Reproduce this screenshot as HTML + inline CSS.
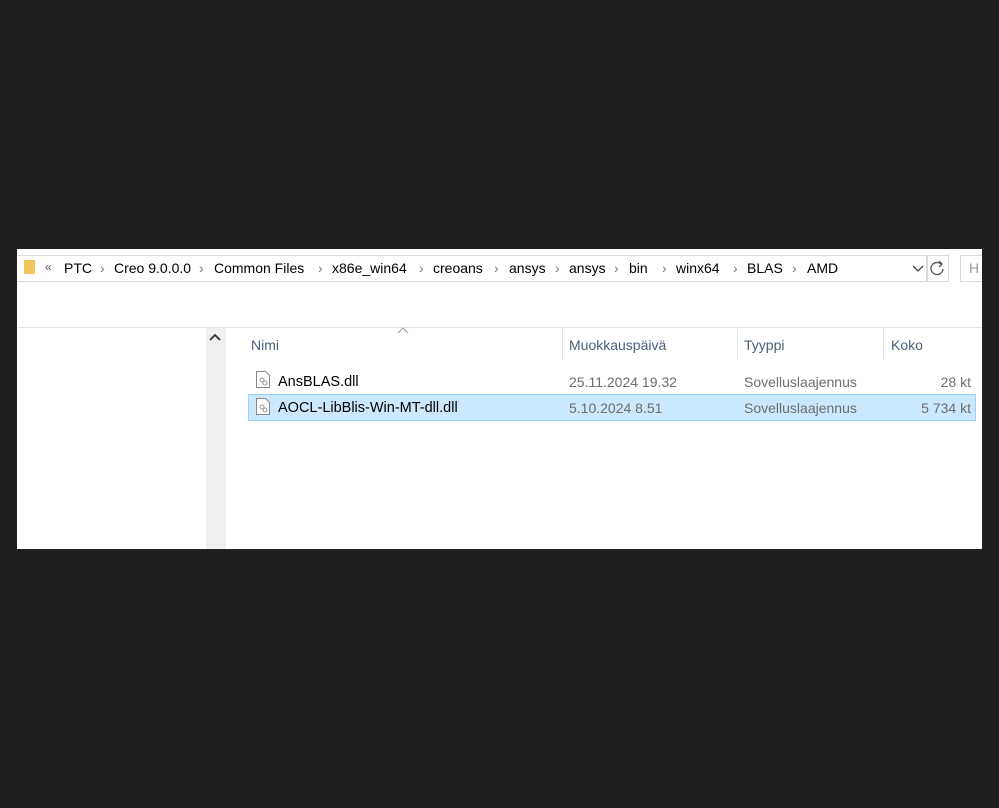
<!DOCTYPE html><html><head><style>
body{margin:0;width:999px;height:808px;background:#1f1f1f;position:relative;overflow:hidden;font-family:"Liberation Sans",sans-serif;font-size:14px;color:#000}
.a{position:absolute;white-space:nowrap}
.g{color:#6d6d6d}
.s{position:absolute;top:260px;color:#777;font-size:14px}
.b{position:absolute;top:260px;white-space:nowrap}
</style></head><body>
<div class="a" style="left:17px;top:249px;width:965px;height:300px;background:#fff"></div>
<div class="a" style="left:18px;top:255px;width:909px;height:27px;border:1px solid #d9d9d9;border-left:none;box-sizing:border-box"></div>
<div class="a" style="left:927px;top:255px;width:22px;height:27px;border:1px solid #d9d9d9;box-sizing:border-box"></div>
<div class="a" style="left:960px;top:255px;width:22px;height:27px;border:1px solid #d9d9d9;border-right:none;box-sizing:border-box"></div>
<div class="a" style="left:969px;top:260px;color:#999">H</div>
<div class="a" style="left:24px;top:260px;width:11px;height:14px;background:#f2c55c;border-radius:1px"></div>
<div class="a" style="left:45px;top:260px;font-size:12px;color:#555">«</div>
<div class="b" style="left:64px">PTC</div><div class="s" style="left:100px">›</div>
<div class="b" style="left:114px">Creo 9.0.0.0</div><div class="s" style="left:199px">›</div>
<div class="b" style="left:214px">Common Files</div><div class="s" style="left:318px">›</div>
<div class="b" style="left:332px">x86e_win64</div><div class="s" style="left:419px">›</div>
<div class="b" style="left:433px">creoans</div><div class="s" style="left:494px">›</div>
<div class="b" style="left:509px">ansys</div><div class="s" style="left:555px">›</div>
<div class="b" style="left:569px">ansys</div><div class="s" style="left:614px">›</div>
<div class="b" style="left:629px">bin</div><div class="s" style="left:662px">›</div>
<div class="b" style="left:676px">winx64</div><div class="s" style="left:733px">›</div>
<div class="b" style="left:747px">BLAS</div><div class="s" style="left:792px">›</div>
<div class="b" style="left:807px">AMD</div>
<svg class="a" style="left:912px;top:265px" width="12" height="8"><path d="M1 1l5 5 5-5" fill="none" stroke="#444" stroke-width="1.3"/></svg>
<svg class="a" style="left:930px;top:260px" width="16" height="18"><path d="M11 4A6 6 0 1 0 13 9" fill="none" stroke="#555" stroke-width="1.3"/><path d="M9 1l3 3-3 3" fill="none" stroke="#555" stroke-width="1.3"/></svg>
<div class="a" style="left:18px;top:327px;width:964px;height:1px;background:#e5e5e5"></div>
<div class="a" style="left:206px;top:328px;width:20px;height:221px;background:#f0f0f0"></div>
<svg class="a" style="left:209px;top:334px" width="12" height="8"><path d="M1 6l5-5 5 5" fill="none" stroke="#333" stroke-width="1.8"/></svg>
<svg class="a" style="left:397px;top:327px" width="12" height="7"><path d="M1 6l5-5 5 5" fill="none" stroke="#999" stroke-width="1"/></svg>
<div class="a" style="left:562px;top:328px;width:1px;height:32px;background:#e5e5e5"></div>
<div class="a" style="left:737px;top:328px;width:1px;height:32px;background:#e5e5e5"></div>
<div class="a" style="left:883px;top:328px;width:1px;height:32px;background:#e5e5e5"></div>
<div class="a" style="left:251px;top:337px;color:#4c607a">Nimi</div>
<div class="a" style="left:569px;top:337px;color:#4c607a">Muokkauspäivä</div>
<div class="a" style="left:744px;top:337px;color:#4c607a">Tyyppi</div>
<div class="a" style="left:891px;top:337px;color:#4c607a">Koko</div>
<div class="a" style="left:248px;top:394px;width:728px;height:27px;background:#cce8ff;border:1px solid #99d1ff;box-sizing:border-box"></div>
<svg class="a" style="left:256px;top:371px" width="14" height="17"><path d="M.5.5h9l4 4v12H.5z" fill="#fff" stroke="#888"/><circle cx="6" cy="9" r="2" fill="none" stroke="#999"/><circle cx="9" cy="12" r="2" fill="none" stroke="#999"/></svg>
<svg class="a" style="left:256px;top:398px" width="14" height="17"><path d="M.5.5h9l4 4v12H.5z" fill="#fff" stroke="#888"/><circle cx="6" cy="9" r="2" fill="none" stroke="#999"/><circle cx="9" cy="12" r="2" fill="none" stroke="#999"/></svg>
<div class="a" style="left:278px;top:374px;font-size:14.5px">AnsBLAS.dll</div>
<div class="a" style="left:278px;top:400px;font-size:14.5px">AOCL-LibBlis-Win-MT-dll.dll</div>
<div class="a g" style="left:569px;top:374px">25.11.2024 19.32</div>
<div class="a g" style="left:569px;top:400px">5.10.2024 8.51</div>
<div class="a g" style="left:744px;top:374px">Sovelluslaajennus</div>
<div class="a g" style="left:744px;top:400px">Sovelluslaajennus</div>
<div class="a g" style="right:28px;top:374px">28 kt</div>
<div class="a g" style="right:28px;top:400px">5 734 kt</div>
</body></html>
